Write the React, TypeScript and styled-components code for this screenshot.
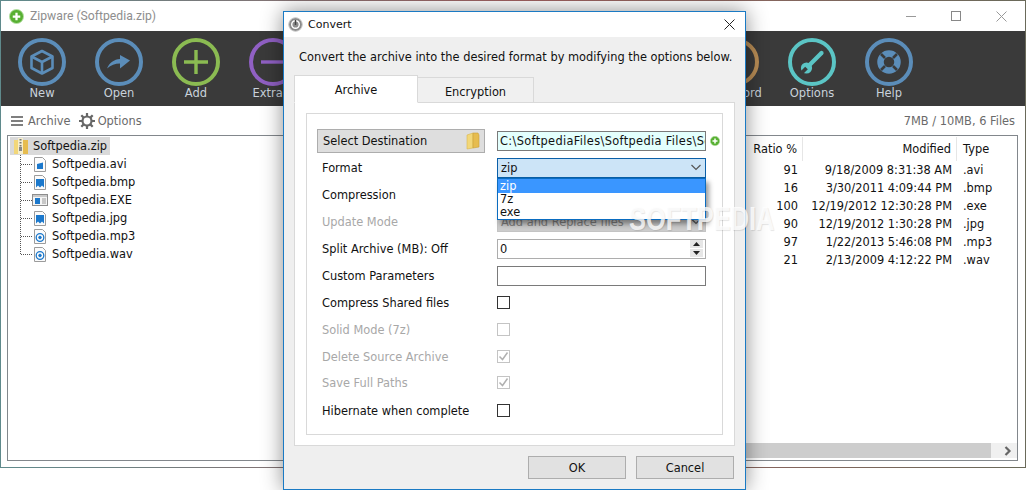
import React from "react";
import styled, { createGlobalStyle } from "styled-components";

const Global = createGlobalStyle`
  html, body { margin: 0; padding: 0; background: #fff; }
  #root { width: 1026px; height: 490px; }
  * { box-sizing: border-box; }
  svg { flex: none; }
`;

const FONT = `"DejaVu Sans", "Liberation Sans", sans-serif`;

const Screen = styled.div`
  position: relative;
  width: 1026px;
  height: 490px;
  overflow: hidden;
  background: #fff;
  font-family: ${FONT};
  font-size: 11.4px;
  color: #111;
`;

const MainWindow = styled.div`
  display: flex;
  flex-direction: column;
  width: 1026px;
  height: 468px;
  border: 1px solid;
  border-image: linear-gradient(90deg, #5f8a8c, #a06060 50%, #6a6a5a 100%) 1;
  background: #fff;
`;

const TitleBar = styled.div`
  display: flex;
  align-items: center;
  height: 30px;
  padding-left: 8px;
  gap: 6px;
  flex: none;
`;

const WindowTitle = styled.span`
  font-family: Roboto, "Noto Sans", sans-serif;
  font-size: 12.2px;
  color: #8e8e8e;
  flex: 1;
`;

const WinControls = styled.div`
  display: flex;
  align-items: center;
  gap: 35px;
  padding-right: 18px;
`;

const Toolbar = styled.div`
  display: flex;
  height: 75px;
  flex: none;
  background: #3a3a3a;
  padding: 7px 0 0 2.5px;
`;

const ToolItem = styled.div`
  width: 77px;
  flex: none;
  display: flex;
  flex-direction: column;
  align-items: center;
  color: #c9d2da;
  font-size: 11.5px;
  line-height: 14px;
`;

const SubBar = styled.div`
  display: flex;
  align-items: center;
  height: 29px;
  flex: none;
  padding: 1px 10px 0 10px;
  color: #6a6a6a;
  font-size: 11.4px;
`;

const SubItem = styled.span<{ $tight?: boolean }>`
  display: inline-flex;
  align-items: center;
  gap: ${(p) => (p.$tight ? "3px" : "5px")};
  margin-right: 8px;
`;

const SubStatus = styled.span`
  margin-left: auto;
`;

const ListPanel = styled.div`
  flex: 1;
  display: flex;
  margin: 0 7px 6px 6px;
  border: 1px solid #82878c;
  min-height: 0;
`;

const Tree = styled.div`
  position: relative;
  width: 280px;
  flex: none;
  padding: 1px 0 0 2px;
`;

const TreeLine = styled.div`
  position: absolute;
  left: 12px;
  top: 19px;
  width: 1px;
  height: 99px;
  border-left: 1px dotted #555;
`;

const TreeRoot = styled.div`
  display: flex;
  align-items: center;
  height: 18px;
  width: 100px;
  gap: 5px;
  padding-left: 4px;
  background: #d9d9d9;
`;

const TreeRow = styled.div`
  display: flex;
  align-items: center;
  height: 18px;
  padding-left: 11px;
  &::before {
    content: "";
    width: 11px;
    border-top: 1px dotted #555;
  }
`;

const IconSlot = styled.span`
  width: 13px;
  height: 15px;
  margin: 0 6px 0 1px;
  display: inline-flex;
  align-items: center;
  justify-content: center;
`;

const TablePane = styled.div`
  flex: 1;
  min-width: 0;
  display: flex;
  flex-direction: column;
`;

const TableRow = styled.div<{ $head?: boolean }>`
  display: grid;
  grid-template-columns: 1fr 154px 60px;
  height: ${(p) => (p.$head ? "25px" : "18px")};
  padding-top: ${(p) => (p.$head ? "1px" : "0")};
  align-items: stretch;
`;

const Cell = styled.div<{ $head?: boolean; $left?: boolean }>`
  display: flex;
  align-items: center;
  justify-content: ${(p) => (p.$left ? "flex-start" : "flex-end")};
  padding: ${(p) => (p.$left ? "0 0 0 6px" : "0 5px 0 0")};
  border-right: ${(p) => (p.$head ? "1px solid #e6e6e6" : "none")};
  white-space: nowrap;
  &:last-child { border-right: none; }
`;

const TableBody = styled.div`
  flex: 1;
`;

const HScroll = styled.div`
  display: flex;
  height: 15px;
  flex: none;
  margin: 0 0 2px 0;
  background: #f0f0f0;
`;

const HThumb = styled.div`
  flex: 1;
  background: #cdcdcd;
`;

const HArrow = styled.div`
  width: 26px;
  display: flex;
  align-items: center;
  justify-content: flex-end;
  padding-right: 5px;
`;

/* dialog */
const Dialog = styled.div`
  position: absolute;
  left: 283px;
  top: 11px;
  width: 463px;
  height: 479px;
  display: flex;
  flex-direction: column;
  background: #efefef;
  border: 1px solid #1a7ac4;
  box-shadow: 0 0 20px rgba(0, 0, 0, 0.45);
`;

const DialogHead = styled.div`
  display: flex;
  align-items: center;
  height: 25px;
  flex: none;
  background: #fff;
  padding: 0 10px 0 4px;
  gap: 5px;
`;

const DialogTitle = styled.span`
  flex: 1;
  font-size: 11px;
`;

const Intro = styled.div`
  height: 38px;
  flex: none;
  padding: 2px 0 0 15px;
  display: flex;
  align-items: center;
`;

const TabStrip = styled.div`
  display: flex;
  align-items: flex-end;
  height: 27px;
  flex: none;
  margin-left: 10px;
  position: relative;
  z-index: 1;
`;

const Tab = styled.div<{ $active?: boolean }>`
  height: ${(p) => (p.$active ? "28px" : "26px")};
  width: ${(p) => (p.$active ? "124px" : "116px")};
  display: flex;
  align-items: center;
  justify-content: center;
  background: ${(p) => (p.$active ? "#fff" : "#f0f0f0")};
  border: 1px solid #d9d9d9;
  border-bottom: ${(p) => (p.$active ? "1px solid #fff" : "1px solid #d9d9d9")};
  border-left: ${(p) => (p.$active ? "1px solid #d9d9d9" : "none")};
  padding: ${(p) => (p.$active ? "1px 0 0" : "3px 0 0")};
  margin-bottom: -1px;
`;

const TabPanel = styled.div`
  margin: 0 10px;
  width: 441px;
  height: 344px;
  flex: none;
  background: #fff;
  border: 1px solid #d9d9d9;
  padding: 10px 11px;
`;

const Group = styled.div`
  height: 322px;
  border: 1px solid #d9d9d9;
  padding: 13px 0 0 15px;
  display: grid;
  grid-template-columns: 175px 209px 1fr;
  grid-auto-rows: 27px;
  align-items: center;
`;

const Label = styled.span<{ $off?: boolean; $raise?: boolean }>`
  grid-column: 1;
  color: ${(p) => (p.$off ? "#a8a8a8" : "#111")};
  margin-bottom: ${(p) => (p.$raise ? "2px" : "0")};
`;

const DestButton = styled.div`
  grid-column: 1;
  width: 168px;
  height: 24px;
  margin-left: -5px;
  padding: 0 4px 0 5px;
  display: flex;
  align-items: center;
  justify-content: space-between;
  background: #dedede;
  border: 1px solid #adadad;
`;

const PathInput = styled.div`
  height: 20px;
  border: 1px solid #7a7a7a;
  background: #e3fffd;
  padding: 0 2px;
  display: flex;
  align-items: center;
  overflow: hidden;
  white-space: nowrap;
  letter-spacing: 0.34px;
`;

const AddPath = styled.span`
  display: flex;
  margin-left: 4px;
`;

const Combo = styled.div<{ $open?: boolean; $off?: boolean }>`
  position: relative;
  height: 20px;
  display: flex;
  align-items: center;
  justify-content: space-between;
  padding: 0 3px;
  border: 1px solid ${(p) => (p.$open ? "#0a5fa8" : p.$off ? "#c4c4c4" : "#7a7a7a")};
  background: ${(p) => (p.$open ? "#cce4f7" : p.$off ? "#cccccc" : "#e1e1e1")};
  color: ${(p) => (p.$off ? "#808080" : "#111")};
`;

const Dropdown = styled.div`
  position: absolute;
  z-index: 3;
  left: -1px;
  right: -1px;
  top: 19px;
  height: 42px;
  background: #fff;
  border: 1px solid #0a6cc0;
  box-shadow: 3px 4px 5px rgba(0, 0, 0, 0.4);
`;

const DropItem = styled.div<{ $active?: boolean }>`
  height: ${(p) => (p.$active ? "14px" : "13px")};
  line-height: ${(p) => (p.$active ? "14px" : "13px")};
  padding-left: 2px;
  background: ${(p) => (p.$active ? "#3a96ff" : "#fff")};
  color: ${(p) => (p.$active ? "#fff" : "#111")};
`;

const TextBox = styled.div<{ $soft?: boolean }>`
  height: 20px;
  display: flex;
  align-items: center;
  justify-content: space-between;
  padding: 0 1px 0 2px;
  border: 1px solid ${(p) => (p.$soft ? "#adadad" : "#7a7a7a")};
  background: #fff;
`;

const Spinner = styled.div`
  display: flex;
  flex-direction: column;
  gap: 1px;
  padding-right: 1px;
`;

const SpinPart = styled.div`
  width: 13px;
  height: 8px;
  background: #e6e6e6;
  display: flex;
  align-items: center;
  justify-content: center;
`;

const Check = styled.span<{ $off?: boolean }>`
  width: 13px;
  height: 13px;
  display: inline-flex;
  align-items: center;
  justify-content: center;
  background: #fff;
  border: 1px solid ${(p) => (p.$off ? "#c4c4c4" : "#333")};
`;

const CheckCell = styled.div<{ $raise?: boolean }>`
  grid-column: 2;
  display: flex;
  align-items: center;
  margin-bottom: ${(p) => (p.$raise ? "2px" : "0")};
`;

const Footer = styled.div`
  flex: 1;
  display: flex;
  justify-content: flex-end;
  gap: 10px;
  padding: 10px 11px 0 0;
`;

const DlgButton = styled.div`
  width: 98px;
  height: 23px;
  display: flex;
  align-items: center;
  justify-content: center;
  background: #e1e1e1;
  border: 1px solid #adadad;
`;

const Watermark = styled.div`
  position: absolute;
  z-index: 5;
  left: 629px;
  top: 200px;
  font-family: "Liberation Sans", sans-serif;
  font-weight: 700;
  font-size: 33px;
  line-height: 38px;
  color: rgba(255, 255, 255, 0.8);
  text-shadow: 1px 1px 1px rgba(0, 0, 0, 0.1);
  transform: scaleX(0.77);
  transform-origin: left center;
`;

/* drawings */
const Ring: React.FC<{ color: string; children?: React.ReactNode }> = ({ color, children }) => (
  <svg width="48" height="48" viewBox="0 0 48 48" fill="none">
    <circle cx="24" cy="24" r="22" stroke={color} strokeWidth="4" />
    {children}
  </svg>
);

const BLUE = "#5b8db9";
const TEAL = "#5bc5c5";
const DARK = "#3a3a3a";
const tools: { label: string; color: string; art?: React.ReactNode }[] = [
  {
    label: "New",
    color: BLUE,
    art: (
      <g stroke={BLUE} strokeWidth="2.6" strokeLinejoin="round">
        <path d="M24 13l10.500 5.500v11.500L24 35.500 13.500 30V18.500z" />
        <path d="M13.500 18.500L24 24l10.500-5.500M24 24v11.500" />
      </g>
    ),
  },
  {
    label: "Open",
    color: BLUE,
    art: <path d="M12 30.500c2.500-6 7-9 13-9.500V17l10 5.500-10 8v-5c-5 0-9 1.500-13 5z" fill={BLUE} />,
  },
  {
    label: "Add",
    color: "#8bbb52",
    art: <path d="M24 12v24M12 24h24" stroke="#8bbb52" strokeWidth="3.4" />,
  },
  {
    label: "Extract",
    color: "#9060c4",
    art: <path d="M12 24h24" stroke="#9060c4" strokeWidth="3.4" />,
  },
  { label: "Test", color: TEAL },
  { label: "View", color: BLUE },
  { label: "Convert", color: BLUE },
  { label: "Repair", color: "#8bbb52" },
  { label: "Comment", color: "#9060c4" },
  { label: "Password", color: "#b98d55" },
  {
    label: "Options",
    color: TEAL,
    art: (
      <g>
        <path d="M33.500 15L21 27.500" stroke={TEAL} strokeWidth="4.200" strokeLinecap="round" />
        <circle cx="18.500" cy="30" r="5.600" fill={TEAL} />
        <path d="M18.500 30l-6.500 6.500" stroke={DARK} strokeWidth="3.800" />
      </g>
    ),
  },
  {
    label: "Help",
    color: BLUE,
    art: (
      <g>
        <circle cx="24" cy="24" r="8.500" stroke={BLUE} strokeWidth="6.500" />
        <path d="M16 16l4 4M32 16l-4 4M16 32l4-4M32 32l-4-4" stroke={DARK} strokeWidth="2.600" />
      </g>
    ),
  },
];

const PlusBadge: React.FC<{ size: number }> = ({ size }) => (
  <svg width={size} height={size} viewBox="0 0 16 16">
    <circle cx="8" cy="8" r="7.500" fill="#58b033" stroke="#b6e0a4" strokeWidth="1" />
    <path d="M8 4v8M4 8h8" stroke="#fff" strokeWidth="2.400" />
  </svg>
);

const Folder: React.FC = () => (
  <svg width="14" height="18" viewBox="0 0 14 18">
    <path d="M1 3l6-2v15l-6 1z" fill="#f2d779" stroke="#d9b64e" strokeWidth="0.600" />
    <path d="M7 1h5l1 2v12l-6 1z" fill="#e6bc4f" stroke="#c99f36" strokeWidth="0.600" />
  </svg>
);

const ZipFolder: React.FC = () => (
  <svg width="14" height="18" viewBox="0 0 14 18">
    <path d="M0 3h4v14H0z" fill="#f2d779" />
    <path d="M9 3h5v14H9z" fill="#e6bc4f" />
    <path d="M4 1h5v16H4z" fill="#f6eecb" />
    <path d="M6.500 2v12" stroke="#777" strokeWidth="2" strokeDasharray="1.500 1.500" />
    <rect x="5" y="10" width="3" height="4" fill="#888" />
  </svg>
);

const FileIcon: React.FC<{ kind: "video" | "image" | "exe" | "audio" }> = ({ kind }) => {
  if (kind === "exe") {
    return (
      <svg width="16" height="12" viewBox="0 0 16 12">
        <rect x="0.500" y="0.500" width="15" height="11" fill="#f4f4f4" stroke="#8d8d8d" />
        <rect x="1" y="1" width="14" height="2" fill="#c9c9c9" />
        <rect x="3" y="4" width="5" height="6" fill="#1b78cc" />
        <path d="M10 5h4M10 7h4M10 9h4" stroke="#9a9a9a" />
      </svg>
    );
  }
  return (
    <svg width="12" height="15" viewBox="0 0 12 15">
      <path d="M0.500 0.500h8l3 3v11h-11z" fill="#fbfbfb" stroke="#9c9c9c" />
      {kind === "video" && <path d="M3 7l6-1.500V12H3z" fill="#1b78cc" />}
      {kind === "image" && <path d="M2 4h8v8.500l-2-2-2 2-2-2-2 2z" fill="#1b78cc" />}
      {kind === "audio" && (
        <g fill="none" stroke="#1b78cc">
          <circle cx="6" cy="8.500" r="3.800" strokeWidth="1.300" />
          <circle cx="6" cy="8.500" r="1.300" fill="#1b78cc" />
        </g>
      )}
    </svg>
  );
};

const Chevron: React.FC = () => (
  <svg width="12" height="7" viewBox="0 0 12 7" fill="none">
    <path d="M1.500 1l4.500 4.500L10.500 1" stroke="#555" strokeWidth="1.200" />
  </svg>
);

const Tick: React.FC = () => (
  <svg width="11" height="11" viewBox="0 0 11 11" fill="none">
    <path d="M1.500 5.500l3 3 5-7" stroke="#b0b0b0" strokeWidth="1.500" />
  </svg>
);

const SpinArrow: React.FC<{ down?: boolean }> = ({ down }) => (
  <svg width="7" height="4" viewBox="0 0 7 4">
    <path d={down ? "M0 0h7L3.500 4z" : "M0 4h7L3.500 0z"} fill="#222" />
  </svg>
);

const files: { name: string; kind: "video" | "image" | "exe" | "audio"; ratio: number; date: string; ext: string }[] = [
  { name: "Softpedia.avi", kind: "video", ratio: 91, date: "9/18/2009 8:31:38 AM", ext: ".avi" },
  { name: "Softpedia.bmp", kind: "image", ratio: 16, date: "3/30/2011 4:09:44 PM", ext: ".bmp" },
  { name: "Softpedia.EXE", kind: "exe", ratio: 100, date: "12/19/2012 12:30:28 PM", ext: ".exe" },
  { name: "Softpedia.jpg", kind: "image", ratio: 90, date: "12/19/2012 1:30:28 PM", ext: ".jpg" },
  { name: "Softpedia.mp3", kind: "audio", ratio: 97, date: "1/22/2013 5:46:08 PM", ext: ".mp3" },
  { name: "Softpedia.wav", kind: "audio", ratio: 21, date: "2/13/2009 4:12:22 PM", ext: ".wav" },
];

const checks: { label: string; off?: boolean; checked?: boolean; raise?: boolean }[] = [
  { label: "Compress Shared files" },
  { label: "Solid Mode (7z)", off: true },
  { label: "Delete Source Archive", off: true, checked: true },
  { label: "Save Full Paths", off: true, checked: true, raise: true },
  { label: "Hibernate when complete" },
];

export default function App() {
  return (
    <Screen>
      <Global />
      <MainWindow>
        <TitleBar>
          <PlusBadge size={15} />
          <WindowTitle>Zipware (Softpedia.zip)</WindowTitle>
          <WinControls>
            <svg width="10" height="10" viewBox="0 0 10 10"><path d="M0 5.500h10" stroke="#999" /></svg>
            <svg width="10" height="10" viewBox="0 0 10 10" fill="none"><rect x="0.500" y="0.500" width="9" height="9" stroke="#888" /></svg>
            <svg width="11" height="11" viewBox="0 0 11 11"><path d="M0.500 0.500l10 10M10.500 0.500l-10 10" stroke="#999" /></svg>
          </WinControls>
        </TitleBar>
        <Toolbar>
          {tools.map((t) => (
            <ToolItem key={t.label}>
              <Ring color={t.color}>{t.art}</Ring>
              <span>{t.label}</span>
            </ToolItem>
          ))}
        </Toolbar>
        <SubBar>
          <SubItem>
            <svg width="12" height="10" viewBox="0 0 12 10"><path d="M0 1h12M0 5h12M0 9h12" stroke="#555" strokeWidth="1.600" /></svg>
            Archive
          </SubItem>
          <SubItem $tight>
            <svg width="16" height="16" viewBox="0 0 16 16" fill="none">
              <circle cx="8" cy="8" r="4.500" stroke="#666" strokeWidth="2.200" />
              <path d="M8 0v3M8 13v3M0 8h3M13 8h3M2.300 2.300l2.100 2.100M11.600 11.600l2.100 2.100M2.300 13.700l2.100-2.100M11.600 4.400l2.100-2.100" stroke="#666" strokeWidth="2.200" />
            </svg>
            Options
          </SubItem>
          <SubStatus>7MB / 10MB, 6 Files</SubStatus>
        </SubBar>
        <ListPanel>
          <Tree>
            <TreeLine />
            <TreeRoot>
              <ZipFolder />
              Softpedia.zip
            </TreeRoot>
            {files.map((f) => (
              <TreeRow key={f.name}>
                <IconSlot><FileIcon kind={f.kind} /></IconSlot>
                {f.name}
              </TreeRow>
            ))}
          </Tree>
          <TablePane>
            <TableRow $head>
              <Cell $head>Ratio %</Cell>
              <Cell $head>Modified</Cell>
              <Cell $head $left>Type</Cell>
            </TableRow>
            <TableBody>
              {files.map((f) => (
                <TableRow key={f.name}>
                  <Cell>{f.ratio}</Cell>
                  <Cell>{f.date}</Cell>
                  <Cell $left>{f.ext}</Cell>
                </TableRow>
              ))}
            </TableBody>
            <HScroll>
              <HThumb />
              <HArrow>
                <svg width="8" height="10" viewBox="0 0 8 10" fill="none"><path d="M1.500 1l4 4-4 4" stroke="#666" strokeWidth="2.200" /></svg>
              </HArrow>
            </HScroll>
          </TablePane>
        </ListPanel>
      </MainWindow>

      <Dialog>
        <DialogHead>
          <svg width="15" height="15" viewBox="0 0 15 15" fill="none">
            <circle cx="7.500" cy="7.500" r="6.800" fill="#8c8c8c" stroke="#c9c9c9" />
            <circle cx="7.500" cy="7.500" r="3.800" stroke="#fff" strokeWidth="1.400" />
            <path d="M7.500 3v5" stroke="#444" strokeWidth="1.400" />
          </svg>
          <DialogTitle>Convert</DialogTitle>
          <svg width="11" height="11" viewBox="0 0 11 11"><path d="M0.500 0.500l10 10M10.500 0.500l-10 10" stroke="#222" /></svg>
        </DialogHead>
        <Intro>Convert the archive into the desired format by modifying the options below.</Intro>
        <TabStrip>
          <Tab $active>Archive</Tab>
          <Tab>Encryption</Tab>
        </TabStrip>
        <TabPanel>
          <Group>
            <DestButton>Select Destination<Folder /></DestButton>
            <PathInput>C:\SoftpediaFiles\Softpedia Files\Softpedia</PathInput>
            <AddPath><PlusBadge size={10} /></AddPath>

            <Label>Format</Label>
            <Combo $open>
              zip
              <Chevron />
              <Dropdown>
                <DropItem $active>zip</DropItem>
                <DropItem>7z</DropItem>
                <DropItem>exe</DropItem>
              </Dropdown>
            </Combo>
            <span />

            <Label>Compression</Label>
            <Combo>Normal<Chevron /></Combo>
            <span />

            <Label $off>Update Mode</Label>
            <Combo $off>Add and Replace files<Chevron /></Combo>
            <span />

            <Label>Split Archive (MB): Off</Label>
            <TextBox $soft>
              0
              <Spinner>
                <SpinPart><SpinArrow /></SpinPart>
                <SpinPart><SpinArrow down /></SpinPart>
              </Spinner>
            </TextBox>
            <span />

            <Label>Custom Parameters</Label>
            <TextBox />
            <span />

            {checks.map((c) => (
              <React.Fragment key={c.label}>
                <Label $off={c.off} $raise={c.raise}>{c.label}</Label>
                <CheckCell $raise={c.raise}>
                  <Check $off={c.off}>{c.checked && <Tick />}</Check>
                </CheckCell>
                <span />
              </React.Fragment>
            ))}
          </Group>
        </TabPanel>
        <Footer>
          <DlgButton>OK</DlgButton>
          <DlgButton>Cancel</DlgButton>
        </Footer>
      </Dialog>
      <Watermark>SOFTPEDIA</Watermark>
    </Screen>
  );
}
